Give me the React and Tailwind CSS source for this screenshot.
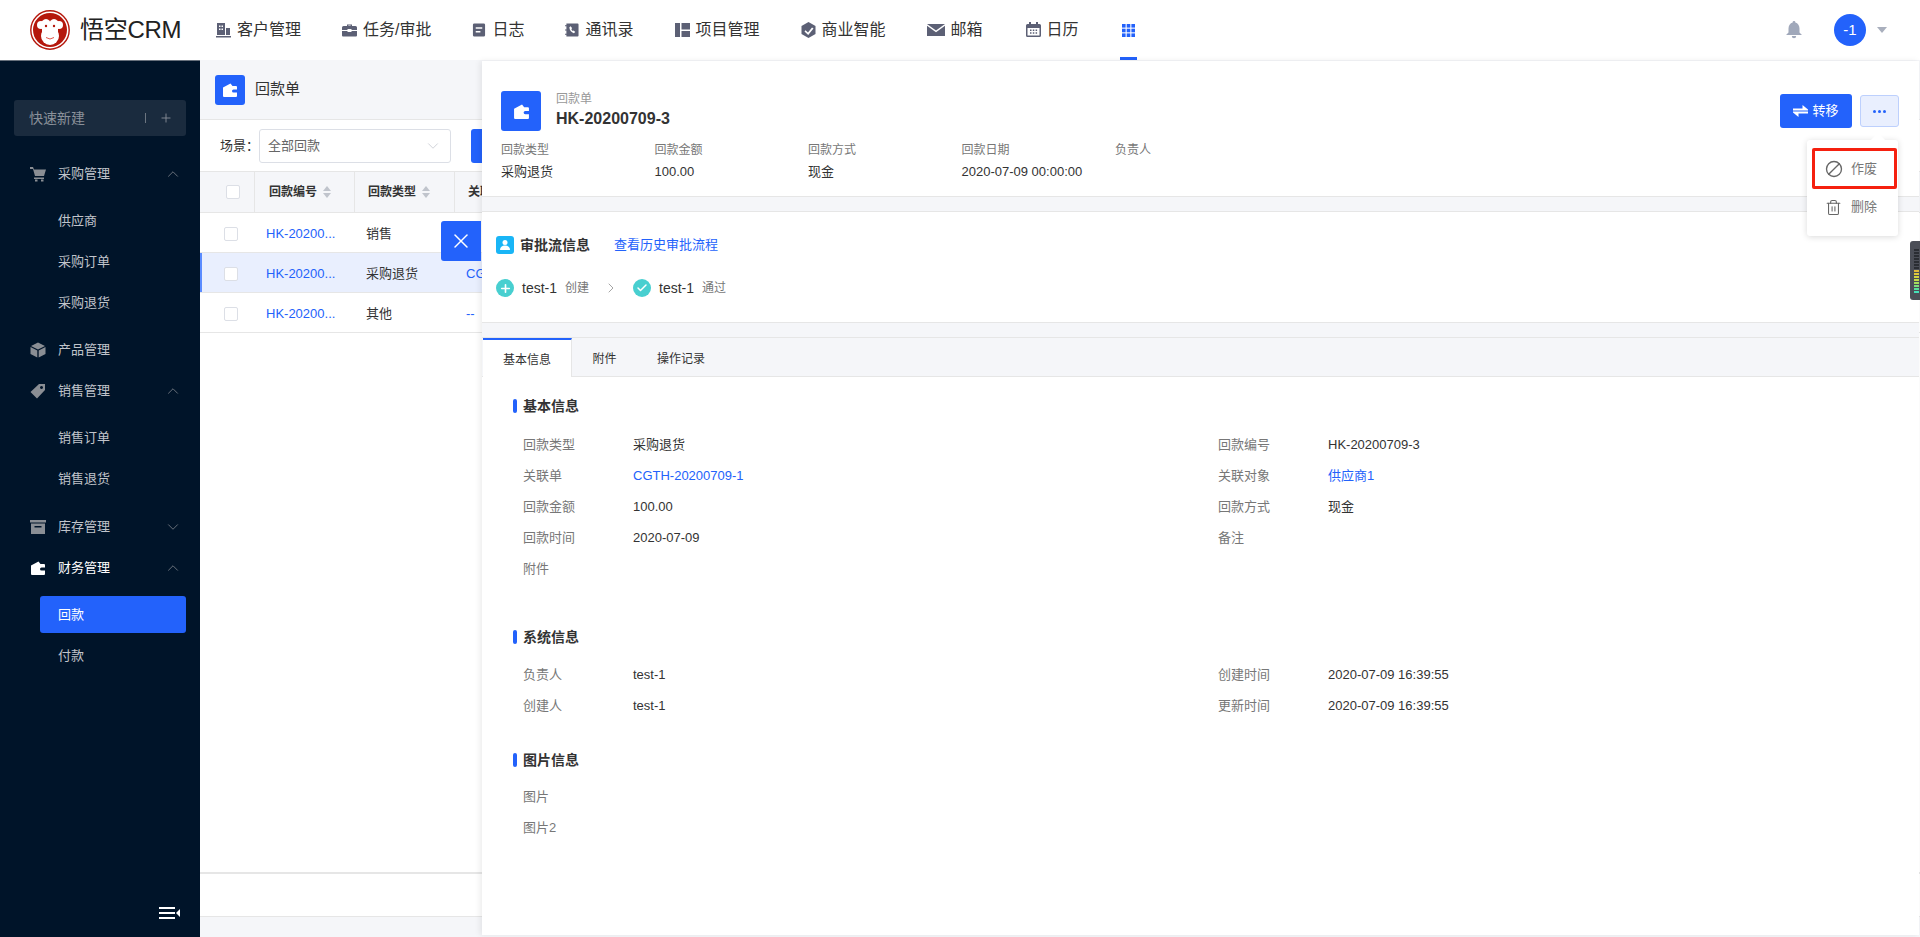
import { X, Plus, ChevronUp, ChevronDown, ChevronRight, Ban, Trash2, Check } from 'lucide-react';

const NAV_ICONS = {
    customer: <path d="M1 1h8v12H1zM3 3.500h1.500v1.500H3zM5.500 3.500H7v1.500H5.500zM3 6.500h1.500V8H3zM5.500 6.500H7V8H5.500zM10 6h4v7h-4zM0 14h15v1.500H0z" fillRule="evenodd" />,
    task: <path d="M5 2.500h5v1.500h3.500A1.500 1.500 0 0 1 15 5.500V8H9.500V7h-4v1H0V5.500A1.500 1.500 0 0 1 1.500 4H5zM6.300 3.500V4h2.400v-.5zM0 9h5.500v1h4V9H15v4.500a1 1 0 0 1-1 1H1a1 1 0 0 1-1-1z" fillRule="evenodd" />,
    log: <path d="M2.500 1h10A1.500 1.500 0 0 1 14 2.500v11a1.500 1.500 0 0 1-1.500 1.500h-10A1.500 1.500 0 0 1 1 13.500v-11A1.500 1.500 0 0 1 2.500 1zM4 5v1.600h7V5zM4 9v1.600h5V9z" fillRule="evenodd" />,
    phone: <path d="M1.500 1h12A1 1 0 0 1 14.500 2v12a1 1 0 0 1-1 1h-12V13H0v-1h1.500V8.500H0v-1h1.500V4H0V3h1.500zM6 4 4.700 5c0 3 2 5.500 4.800 6.500l1.500-1.300-1.800-1.700-.9.600C7.400 8.600 7 7.800 6.800 7l.9-.8z" fillRule="evenodd" />,
    project: <path d="M0 1h5v14H0zM6.500 1H15v6.500H6.500zM6.500 9H15v6H6.500z" />,
    bi: <path d="M7.500 0 14.500 4v8l-7 4-7-4V4zM11 5.500 7 10.500 4.500 8.200 3.500 9.500 7.200 13 12.500 6.500z" fillRule="evenodd" />,
    mail: <path d="M0 2h18L9 8.500zM0 3.800v10.200h18V3.800L9 10.300z" />,
    calendar: <path d="M3 0h2v2h5V0h2v2h1.500A1.500 1.500 0 0 1 15 3.500v10a1.500 1.500 0 0 1-1.500 1.500h-12A1.500 1.500 0 0 1 0 13.500v-10A1.500 1.500 0 0 1 1.500 2H3zM1.500 6v7.500h12V6zM4 7.500h1.500V9H4zM6.800 7.500h1.500V9H6.800zM9.600 7.500h1.500V9H9.600zM4 10.300h1.500v1.500H4zM6.800 10.300h1.500v1.500H6.800zM9.600 10.300h1.500v1.500H9.600z" fillRule="evenodd" />,
};

const NAV_ITEMS = [
    { key: 'customer', label: '客户管理', w: 'w-[15px]' },
    { key: 'task', label: '任务/审批', w: 'w-[15px]' },
    { key: 'log', label: '日志', w: 'w-[14px]' },
    { key: 'phone', label: '通讯录', w: 'w-[14px]' },
    { key: 'project', label: '项目管理', w: 'w-[15px]' },
    { key: 'bi', label: '商业智能', w: 'w-[15px]' },
    { key: 'mail', label: '邮箱', w: 'w-[18px]', box: '0 0 18 16' },
    { key: 'calendar', label: '日历', w: 'w-[15px]', extra: 'ml-[2px]' },
];

const WalletIcon = ({ className }) => (
    <svg viewBox="0 0 16 16" className={className} fill="currentColor">
        <path d="M1 5.500 8.500 1.500 10.500 4H14a1 1 0 0 1 1 1v2.500H11.500a1.500 1.500 0 0 0 0 3H15V14a1 1 0 0 1-1 1H2a1 1 0 0 1-1-1z" />
    </svg>
);

const SIDE_ICONS = {
    cart: <path d="M0 1h3l1 2.500h12L14 10H5L3 3H0zM4 11.500h10V13H4zM5 13.500h2.500V15.500H5zM11 13.500h2.500V15.500H11z" />,
    box: <path d="M8 .5 15 4 8 7.500 1 4zM.500 5 7.300 8.500V15.500L.500 12zM15.500 5 8.700 8.500V15.500L15.500 12z" />,
    tag: <path d="M9 1h6v6l-8 8.500L.5 9zM11.500 3a1.500 1.500 0 1 0 .01 0z" fillRule="evenodd" />,
    store: <path d="M0 1h16v2.500H0zM1 4.500h14V15H1zM4.500 7v1.500h7V7z" fillRule="evenodd" />,
};

const MenuGroup = ({ icon, label, open, hasArrow = true, active, children }) => (
    <div>
        <div className={`flex items-center h-[41px] pl-[30px] pr-[18px] text-[13px] ${active ? 'text-white' : 'text-[#c0c4cb]'}`}>
            {icon === 'wallet' ? (
                <WalletIcon className="w-[16px] h-[16px] text-white" />
            ) : (
                <svg viewBox="0 0 16 16" fill="#8a8e94" fillRule="evenodd" className="w-[16px] h-[16px]">{SIDE_ICONS[icon]}</svg>
            )}
            <span className="ml-[12px] flex-1">{label}</span>
            {hasArrow && (open
                ? <ChevronUp size={18} strokeWidth={1} className="text-[#8a8e94]" />
                : <ChevronDown size={18} strokeWidth={1} className="text-[#8a8e94]" />)}
        </div>
        {children && <div className="pt-[6px] pb-[6.500px]">{children}</div>}
    </div>
);

const MenuChild = ({ label, active }) => (
    <div className="h-[41px] pl-[40px] pr-[14px] py-[2px] text-[13px]">
        <div className={`h-[37px] flex items-center pl-[18px] rounded-[3px] ${active ? 'bg-[#2362fb] text-white' : 'text-[#c0c4cb]'}`}>
            {label}
        </div>
    </div>
);

const Sidebar = () => (
    <aside className="relative w-[200px] shrink-0 bg-[#001429] border-t border-[#68717c] pt-[39px]">
        <div className="mx-[14px] h-[36px] rounded-[3px] bg-[#1a2b3e] flex items-center pl-[15px] text-[14px] text-[#8b919a]">
            <span className="flex-1">快速新建</span>
            <span className="w-px h-[10px] bg-[#6c7580]" />
            <Plus size={14} strokeWidth={1.500} className="mx-[13px] text-[#8b919a]" />
        </div>
        <div className="mt-[17px]">
            <MenuGroup icon="cart" label="采购管理" open>
                <MenuChild label="供应商" />
                <MenuChild label="采购订单" />
                <MenuChild label="采购退货" />
            </MenuGroup>
            <MenuGroup icon="box" label="产品管理" hasArrow={false} />
            <MenuGroup icon="tag" label="销售管理" open>
                <MenuChild label="销售订单" />
                <MenuChild label="销售退货" />
            </MenuGroup>
            <MenuGroup icon="store" label="库存管理" />
            <MenuGroup icon="wallet" label="财务管理" open active>
                <MenuChild label="回款" active />
                <MenuChild label="付款" />
            </MenuGroup>
        </div>
        {/* collapse toggle at the foot of the sidebar */}
        <svg viewBox="0 0 22 12" className="absolute left-[159px] bottom-[18px] w-[22px] h-[12px]" fill="#fff">
            <rect x="0" y="0" width="16" height="2" />
            <rect x="0" y="5" width="16" height="2" />
            <rect x="0" y="10" width="16" height="2" />
            <path d="M21 2v8l-4-4z" />
        </svg>
    </aside>
);

const Logo = () => (
    <svg viewBox="0 0 40 40" className="w-[40px] h-[40px] shrink-0">
        <circle cx="20" cy="20" r="19.200" fill="#fff" stroke="#b5170c" strokeWidth="1.400" />
        <circle cx="20" cy="20" r="17" fill="#b5170c" />
        <circle cx="11" cy="15" r="4" fill="#fff" />
        <circle cx="29" cy="15" r="4" fill="#fff" />
        <ellipse cx="16" cy="15" rx="5" ry="6" fill="#fff" />
        <ellipse cx="24" cy="15" rx="5" ry="6" fill="#fff" />
        <ellipse cx="20" cy="26" rx="9" ry="9" fill="#fff" />
        <rect x="12" y="16" width="16" height="9" fill="#fff" />
        <circle cx="16" cy="16" r="1.200" fill="#b5170c" />
        <circle cx="24" cy="16" r="1.200" fill="#b5170c" />
        <path d="M16 27.500q4 3 8 0" stroke="#e0564c" strokeWidth="1" fill="none" />
    </svg>
);

const Header = () => (
    <header className="h-[60px] shrink-0 bg-white flex items-center pl-[30px] pr-[33px]">
        <Logo />
        <span className="ml-[10px] w-[136px] text-[24px] text-[#222] whitespace-nowrap tracking-[-0.3px]">悟空CRM</span>
        <nav className="flex items-center gap-[41px] h-full">
            {NAV_ITEMS.map((item) => (
                <div key={item.key} className={`flex items-center gap-[6px] text-[16px] text-[#333] ${item.extra || ''}`}>
                    <svg viewBox={item.box || '0 0 15 16'} fill="#5c6075" className={`${item.w} h-[16px]`}>{NAV_ICONS[item.key]}</svg>
                    <span>{item.label}</span>
                </div>
            ))}
            <div className="relative h-full flex items-center px-[2px]">
                <svg viewBox="0 0 13 13" fill="#2362fb" className="w-[13px] h-[13px]">
                    {[0, 1, 2].flatMap((r) => [0, 1, 2].map((c) => (
                        <rect key={`${r}-${c}`} x={c * 4.700} y={r * 4.700} width="3.600" height="3.600" />
                    )))}
                </svg>
                <span className="absolute left-0 right-0 bottom-0 h-[3px] bg-[#2362fb]" />
            </div>
        </nav>
        <div className="ml-auto flex items-center">
            <svg viewBox="0 0 16 18" fill="#a0a8ba" className="w-[16px] h-[18px]">
                <path d="M8 0a1.300 1.300 0 0 1 1.300 1.500C12 2.200 13.500 4.500 13.500 7.500v4L16 14H0l2.500-2.500v-4c0-3 1.500-5.300 4.200-6A1.300 1.300 0 0 1 8 0zM5.800 15h4.400a2.200 2.200 0 0 1-4.400 0z" />
            </svg>
            <div className="ml-[32px] w-[32px] h-[32px] rounded-full bg-[#2362fb] text-white text-[15px] flex items-center justify-center">-1</div>
            <span className="ml-[11px] w-0 h-0 border-x-[5px] border-x-transparent border-t-[6px] border-t-[#a9afbd]" />
        </div>
    </header>
);

const SortIcon = () => (
    <span className="ml-[6px] flex flex-col gap-[2px]">
        <span className="w-0 h-0 border-x-[4px] border-x-transparent border-b-[5px] border-b-[#c0c4cc]" />
        <span className="w-0 h-0 border-x-[4px] border-x-transparent border-t-[5px] border-t-[#c0c4cc]" />
    </span>
);

const Checkbox = ({ header }) => (
    <span className={`block w-[14px] h-[14px] bg-white border border-[#dcdfe6] rounded-[2px] ${header ? 'ml-[26px]' : 'ml-[24px]'}`} />
);

const ROWS = [
    { no: 'HK-20200...', type: '销售', rel: '' },
    { no: 'HK-20200...', type: '采购退货', rel: 'CGTH-20200709-1', selected: true },
    { no: 'HK-20200...', type: '其他', rel: '--' },
];

const ListPage = () => (
    <main className="flex-1 min-w-0 flex flex-col bg-[#f5f6f9]">
        <div className="h-[60px] shrink-0 flex items-center pl-[15px] border-b border-[#e6e6e6]">
            <span className="w-[30px] h-[30px] rounded-[3px] bg-[#2362fb] flex items-center justify-center">
                <WalletIcon className="w-[16px] h-[16px] text-white" />
            </span>
            <span className="ml-[10px] text-[15px] text-[#333]">回款单</span>
        </div>
        <div className="h-[51px] shrink-0 bg-white flex items-center pl-[20px] text-[13px] text-[#333]">
            <span>场景：</span>
            <div className="w-[192px] h-[34px] border border-[#dcdfe6] rounded-[3px] flex items-center justify-between px-[8px] text-[#666]">
                全部回款
                <ChevronDown size={18} strokeWidth={1} className="text-[#c0c4cc]" />
            </div>
            <span className="ml-[20px] w-[40px] h-[34px] rounded-[3px] bg-[#2362fb]" />
        </div>
        <div className="flex-1 bg-white">
            <div className="flex h-[42px] bg-[#f5f6f9] border-y border-[#e6e6e6] text-[12px] font-bold text-[#333]">
                <div className="w-[55px] flex items-center border-r border-[#e6e6e6]"><Checkbox header /></div>
                <div className="w-[100px] flex items-center pl-[14px] border-r border-[#e6e6e6]">回款编号<SortIcon /></div>
                <div className="w-[100px] flex items-center pl-[13px] border-r border-[#e6e6e6]">回款类型<SortIcon /></div>
                <div className="flex-1 flex items-center pl-[13px] whitespace-nowrap overflow-hidden">关联单</div>
            </div>
            {ROWS.map((row, i) => (
                <div key={i} className={`flex h-[40px] pt-[2px] items-center border-b border-[#e6e6e6] text-[13px] ${row.selected ? 'bg-[#e9effe] shadow-[inset_2px_0_0_#5b8cff]' : 'bg-white'}`}>
                    <div className="w-[55px]"><Checkbox /></div>
                    <div className="w-[100px] pl-[11px] text-[#2362fb] whitespace-nowrap">{row.no}</div>
                    <div className="w-[100px] pl-[11px] text-[#333]">{row.type}</div>
                    <div className="flex-1 pl-[11px] text-[#2362fb] whitespace-nowrap overflow-hidden">{row.rel}</div>
                </div>
            ))}
        </div>
        <div className="h-[44px] shrink-0 bg-white border-t-2 border-[#e6e6e6]" />
        <div className="h-[21px] shrink-0 border-t border-[#e6e6e6]" />
    </main>
);

const Field = ({ label, value, link }) => (
    <div className="flex h-[31px] items-center text-[13px]">
        <span className="w-[110px] shrink-0 text-[#777]">{label}</span>
        <span className={link ? 'text-[#2362fb]' : 'text-[#333]'}>{value}</span>
    </div>
);

const Section = ({ title, left, right, className, rowsClass = 'mt-[13px]' }) => (
    <section className={className}>
        <div className="flex items-center h-[20px] pl-[31px]">
            <span className="w-[4px] h-[14px] rounded-[2px] bg-[#2362fb]" />
            <span className="ml-[6px] text-[14px] font-bold text-[#333]">{title}</span>
        </div>
        <div className={`${rowsClass} flex pl-[41px]`}>
            <div className="w-[695px]">{left.map((f) => <Field key={f.label} {...f} />)}</div>
            <div className="flex-1">{right.map((f) => <Field key={f.label} {...f} />)}</div>
        </div>
    </section>
);

const SUMMARY = [
    { label: '回款类型', value: '采购退货' },
    { label: '回款金额', value: '100.00' },
    { label: '回款方式', value: '现金' },
    { label: '回款日期', value: '2020-07-09 00:00:00' },
    { label: '负责人', value: '' },
];

const GreyBand = () => <div className="h-[16px] shrink-0 bg-[#f5f6f9] border-y border-[#e6e6e6]" />;

const DetailPanel = () => (
    <div className="absolute left-[482px] top-[61px] right-[1px] bottom-[2px] bg-white flex flex-col shadow-[-2px_0_6px_rgba(0,0,0,0.08)] z-10">
        <div className="h-[135px] shrink-0 pt-[30px] pl-[19px] pr-[20px]">
            <div className="flex items-start">
                <span className="w-[40px] h-[40px] rounded-[3px] bg-[#2362fb] flex items-center justify-center">
                    <WalletIcon className="w-[17px] h-[17px] text-white" />
                </span>
                <div className="ml-[15px]">
                    <div className="text-[12px] leading-[16px] text-[#999]">回款单</div>
                    <div className="mt-[2px] text-[16px] leading-[20px] font-bold text-[#333]">HK-20200709-3</div>
                </div>
                <div className="ml-auto mt-[3px] flex items-center gap-[8px]">
                    <button className="w-[72px] h-[34px] rounded-[3px] bg-[#2362fb] text-white text-[13px] flex items-center justify-center gap-[4px]">
                        <svg viewBox="0 0 15 12" fill="#fff" className="w-[15px] h-[12px]">
                            <path d="M9.500 0 15 4.500v1H0V3.500h9.500zM0 6.500h15v2H5.500V12L0 7.500z" />
                        </svg>
                        转移
                    </button>
                    <button className="w-[39px] h-[32px] rounded-[3px] bg-[#e9effe] border border-[#bdd0fd] text-[#2362fb] flex items-center justify-center gap-[2px]">
                        <span className="w-[3px] h-[3px] rounded-full bg-[#2362fb]" />
                        <span className="w-[3px] h-[3px] rounded-full bg-[#2362fb]" />
                        <span className="w-[3px] h-[3px] rounded-full bg-[#2362fb]" />
                    </button>
                </div>
            </div>
            <div className="mt-[11px] flex">
                {SUMMARY.map((s) => (
                    <div key={s.label} className="w-[153.500px]">
                        <div className="text-[12px] leading-[16px] text-[#777]">{s.label}</div>
                        <div className="mt-[6px] text-[13px] leading-[16px] text-[#333]">{s.value}</div>
                    </div>
                ))}
            </div>
        </div>
        <GreyBand />
        <div className="h-[110px] shrink-0 pl-[14px] pt-[23px]">
            <div className="flex items-center h-[20px]">
                <span className="w-[18px] h-[18px] rounded-[3px] bg-[#19b5f6] flex items-center justify-center">
                    <svg viewBox="0 0 12 12" fill="#fff" className="w-[12px] h-[12px]">
                        <circle cx="6" cy="3.500" r="2.500" />
                        <path d="M1 11c0-3 2-4.500 5-4.500s5 1.500 5 4.500z" />
                    </svg>
                </span>
                <span className="ml-[6px] text-[14px] font-bold text-[#333]">审批流信息</span>
                <span className="ml-[24px] text-[13px] text-[#2362fb]">查看历史审批流程</span>
            </div>
            <div className="mt-[23px] flex items-center h-[20px]">
                <span className="w-[18px] h-[18px] rounded-full bg-[#48cfd0] flex items-center justify-center text-white">
                    <Plus size={13} strokeWidth={3} />
                </span>
                <span className="ml-[8px] text-[14px] text-[#333]">test-1</span>
                <span className="ml-[8px] text-[12px] text-[#777]">创建</span>
                <ChevronRight size={16} strokeWidth={1} className="ml-[14px] text-[#777]" />
                <span className="ml-[14px] w-[18px] h-[18px] rounded-full bg-[#48cfd0] flex items-center justify-center text-white">
                    <Check size={12} strokeWidth={3} />
                </span>
                <span className="ml-[8px] text-[14px] text-[#333]">test-1</span>
                <span className="ml-[8px] text-[12px] text-[#777]">通过</span>
            </div>
        </div>
        <GreyBand />
        <div className="flex h-[39px] shrink-0 bg-[#f5f6f9] border-b border-[#e6e6e6] text-[12px] text-[#333]">
            <div className="w-[89px] -mb-px ml-px pt-[2px] bg-white border-t-2 border-[#2362fb] border-r border-r-[#e6e6e6] flex items-center justify-center">基本信息</div>
            <div className="w-[61px] pt-[4px] flex items-center justify-center ml-[2px]">附件</div>
            <div className="ml-[2px] pt-[4px] w-[88px] flex items-center justify-center">操作记录</div>
        </div>
        <div className="flex-1 overflow-hidden pt-[19px]">
            <Section
                title="基本信息"
                left={[
                    { label: '回款类型', value: '采购退货' },
                    { label: '关联单', value: 'CGTH-20200709-1', link: true },
                    { label: '回款金额', value: '100.00' },
                    { label: '回款时间', value: '2020-07-09' },
                    { label: '附件', value: '' },
                ]}
                right={[
                    { label: '回款编号', value: 'HK-20200709-3' },
                    { label: '关联对象', value: '供应商1', link: true },
                    { label: '回款方式', value: '现金' },
                    { label: '备注', value: '' },
                ]}
            />
            <Section
                title="系统信息"
                className="mt-[43px]"
                rowsClass="mt-[12px]"
                left={[
                    { label: '负责人', value: 'test-1' },
                    { label: '创建人', value: 'test-1' },
                ]}
                right={[
                    { label: '创建时间', value: '2020-07-09 16:39:55' },
                    { label: '更新时间', value: '2020-07-09 16:39:55' },
                ]}
            />
            <Section
                title="图片信息"
                className="mt-[29px]"
                rowsClass="mt-[11px]"
                left={[
                    { label: '图片', value: '' },
                    { label: '图片2', value: '' },
                ]}
                right={[]}
            />
        </div>
    </div>
);

const MoreMenu = () => (
    <div className="absolute left-[1807px] top-[140px] w-[91px] h-[96px] bg-white rounded-[3px] shadow-[0_1px_6px_rgba(0,0,0,0.15)] pt-[8px] z-20 text-[13px] text-[#777]">
        <span className="absolute -top-[5px] left-[66px] w-[10px] h-[10px] rotate-45 bg-white" />
        <div className="relative ml-[5px] mr-[1px] h-[41px] border-[3px] border-[#f5200f] rounded-[2px] flex items-center pl-[10px]">
            <Ban size={18} strokeWidth={1.800} className="text-[#666] -scale-x-100" />
            <span className="ml-[8px]">作废</span>
        </div>
        <div className="relative ml-[5px] mr-[1px] mt-[4px] h-[28px] flex items-center pl-[13px]">
            <Trash2 size={17} strokeWidth={1.500} className="text-[#666]" />
            <span className="ml-[9px]">删除</span>
        </div>
    </div>
);

const METER_BARS = [
    'bg-[#2a2d33]', 'bg-[#2a2d33]', 'bg-[#2a2d33]', 'bg-[#2a2d33]', 'bg-[#2a2d33]', 'bg-[#2a2d33]', 'bg-[#2a2d33]',
    'bg-[#e0b93a]', 'bg-[#e0c83a]', 'bg-[#d4d43f]', 'bg-[#c3dc4a]', 'bg-[#a4df5c]', 'bg-[#7fe07a]', 'bg-[#5ae09a]', 'bg-[#45e0b8]',
];

const MeterWidget = () => (
    <div className="absolute right-0 top-[241px] w-[10px] h-[59px] rounded-l-[3px] bg-[#4b4e57] flex flex-col justify-center items-end pr-[1px] gap-[1px] z-20">
        {METER_BARS.map((color, i) => <span key={i} className={`block w-[5px] h-[2px] ${color}`} />)}
    </div>
);

export default function App() {
    return (
        <div className="relative w-screen h-screen overflow-hidden flex flex-col bg-white font-['Liberation_Sans','Noto_Sans_CJK_SC',sans-serif]">
            <Header />
            <div className="flex-1 min-h-0 flex">
                <Sidebar />
                <ListPage />
            </div>
            <DetailPanel />
            <button className="absolute left-[441px] top-[221px] w-[40px] h-[40px] bg-[#2362fb] rounded-l-[3px] flex items-center justify-center text-white z-10">
                <X size={24} strokeWidth={1.500} />
            </button>
            <MoreMenu />
            <MeterWidget />
        </div>
    );
}
